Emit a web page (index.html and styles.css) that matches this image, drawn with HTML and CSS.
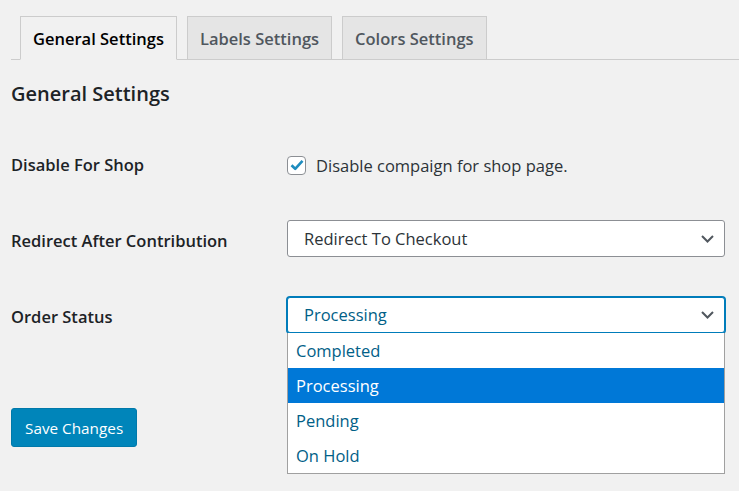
FILE: index.html
```html
<!DOCTYPE html>
<html>
<head>
<meta charset="utf-8">
<link rel="stylesheet" href="styles.css">
</head>
<body>
<div class="wrap">
  <nav class="tabs">
    <a class="tab active">General Settings</a>
    <a class="tab">Labels Settings</a>
    <a class="tab">Colors Settings</a>
  </nav>
  <h2 class="title">General Settings</h2>
  <div class="form">
    <div class="row row-check">
      <div class="label">Disable For Shop</div>
      <div class="field">
        <label class="check-label">
          <span class="checkbox">
            <svg width="14" height="12" viewBox="0 0 14 12"><path d="M1.5 6.2 L5.2 9.8 L12.5 1.8" fill="none" stroke="#1e8cbe" stroke-width="2.6" stroke-linejoin="round"/></svg>
          </span>
          Disable compaign for shop page.
        </label>
      </div>
    </div>
    <div class="row">
      <div class="label">Redirect After Contribution</div>
      <div class="field">
        <div class="select">
          <span>Redirect To Checkout</span>
          <svg class="chev" width="13" height="8" viewBox="0 0 13 8"><path d="M1 1 L6.5 6.5 L12 1" fill="none" stroke="#50575e" stroke-width="2"/></svg>
        </div>
      </div>
    </div>
    <div class="row row-last">
      <div class="label">Order Status</div>
      <div class="field">
        <div class="select focus">
          <span>Processing</span>
          <svg class="chev" width="13" height="8" viewBox="0 0 13 8"><path d="M1 1 L6.5 6.5 L12 1" fill="none" stroke="#50575e" stroke-width="2"/></svg>
        </div>
        <ul class="dropdown">
          <li>Completed</li>
          <li class="selected">Processing</li>
          <li>Pending</li>
          <li>On Hold</li>
        </ul>
      </div>
    </div>
  </div>
  <button class="button">Save Changes</button>
</div>
</body>
</html>
```

FILE: styles.css
```css
html, body {
  margin: 0;
  padding: 0;
  background: #f1f1f1;
}
body {
  font-family: "Open Sans", "Noto Sans", sans-serif;
  color: #1d2327;
  font-size: 16.5px;
  min-height: 491px;
}
.wrap {
  padding: 16px 0 0 11px;
  min-height: 475px;
}
.tabs {
  display: flex;
  gap: 10px;
  padding-left: 9px;
  border-bottom: 1px solid #cccccc;
  height: 43px;
}
.tab {
  box-sizing: border-box;
  height: 44px;
  padding: 0 12px;
  border: 1px solid #cccccc;
  background: #e5e5e5;
  color: #50575e;
  font-size: 16.5px;
  font-weight: 600;
  display: flex;
  align-items: center;
}
.tab.active {
  background: #f1f1f1;
  color: #000000;
  border-bottom-color: #f1f1f1;
}
.title {
  margin: 21px 0 0 0;
  font-size: 20px;
  line-height: 26px;
  font-weight: 600;
  color: #1d2327;
}
.form {
  margin-top: 42px;
  display: flex;
  flex-direction: column;
}
.row {
  display: flex;
  align-items: center;
  height: 37px;
  margin-bottom: 39px;
}
.row-check {
  height: 32px;
}
.row-last {
  margin-bottom: 0;
}
.label {
  width: 276px;
  font-weight: 600;
  font-size: 16.5px;
  line-height: 24px;
  padding-top: 4px;
}
.row-check .label {
  padding-top: 0;
}
.field {
  position: relative;
  width: 438px;
}
.check-label {
  display: flex;
  align-items: center;
  gap: 10px;
  font-size: 16.5px;
  color: #2c3338;
}
.checkbox {
  box-sizing: border-box;
  width: 19px;
  height: 19px;
  border: 1px solid #8c8f94;
  border-radius: 4px;
  background: #ffffff;
  display: flex;
  align-items: center;
  justify-content: center;
}
.select {
  box-sizing: border-box;
  height: 37px;
  width: 438px;
  border: 1px solid #8c8f94;
  border-radius: 3px;
  background: #ffffff;
  display: flex;
  align-items: center;
  justify-content: space-between;
  padding: 0 10px 0 16px;
  font-size: 16.5px;
  color: #2c3338;
}
.select.focus {
  border-color: #007cba;
  box-shadow: 0 0 0 1px #007cba;
  color: #016087;
  height: 36px;
}
.dropdown {
  position: absolute;
  z-index: 10;
  top: 100%;
  left: 0;
  box-sizing: border-box;
  width: 438px;
  margin: 0;
  padding: 0;
  list-style: none;
  background: #ffffff;
  border: 1px solid #a0a0a0;
  border-top: none;
}
.dropdown li {
  height: 35px;
  line-height: 35px;
  padding-left: 8px;
  font-size: 16.5px;
  color: #016087;
}
.dropdown li.selected {
  background: #0078d7;
  color: #ffffff;
}
.button {
  margin-top: 75px;
  height: 39px;
  padding: 0 13px;
  background: #0085ba;
  border: 1px solid #0079aa;
  border-radius: 3px;
  color: #ffffff;
  font-family: "Open Sans", "Noto Sans", sans-serif;
  font-size: 15.3px;
}
```
